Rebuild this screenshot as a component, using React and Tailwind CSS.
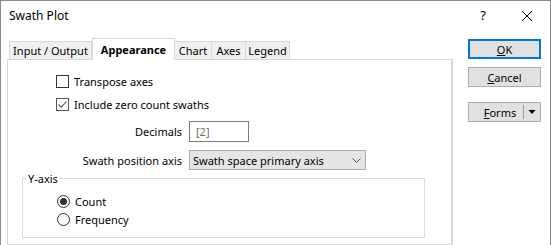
import React from 'react';

const font = { fontFamily: '"Noto Sans", "Open Sans", sans-serif' };

const tabs = [
  { label: 'Input / Output', w: 'w-[83px]' },
  { label: 'Appearance', w: 'w-[83px]', active: true },
  { label: 'Chart', w: 'w-[38px]' },
  { label: 'Axes', w: 'w-[35px]' },
  { label: 'Legend', w: 'w-[45px]' },
];

const Checkbox = ({ checked, label }) => (
  <div className="flex items-center h-[13px]">
    <div className={`w-[13px] h-[13px] border bg-white flex items-center justify-center ${checked ? 'border-[#555]' : 'border-[#333]'}`}>
      {checked && (
        <svg width="11" height="11" viewBox="0 0 11 11">
          <path d="M1.5 5.5 L4.2 8.2 L9.5 2.5" fill="none" stroke="#555" strokeWidth="1.1" />
        </svg>
      )}
    </div>
    <span className="ml-[5px]">{label}</span>
  </div>
);

const Radio = ({ checked, label }) => (
  <div className="flex items-center h-[13px]">
    <div className="w-[13px] h-[13px] rounded-full border border-[#333] bg-white flex items-center justify-center">
      {checked && <div className="w-[7px] h-[7px] rounded-full bg-[#333]" />}
    </div>
    <span className="ml-[5px]">{label}</span>
  </div>
);

const Btn = ({ children, primary, className = '' }) => (
  <div className={`h-[20px] w-[73px] bg-[#e1e1e1] flex items-center justify-center ${primary ? 'border-2 border-[#0078d7]' : 'border border-[#adadad]'} ${className}`}>
    {children}
  </div>
);

export default function App() {
  return (
    <div className="w-[551px] h-[245px] bg-white border-t border-l border-r border-[#8a8a8a] text-[11px] leading-[15px] text-black overflow-hidden flex flex-col whitespace-nowrap" style={font}>
      {/* title bar */}
      <div className="h-[29px] flex items-center shrink-0 text-[12px]">
        <span className="ml-[8px] flex-1">Swath Plot</span>
        <span className="w-[12px] text-center mr-[32px] text-[13px]">?</span>
        <svg width="12" height="12" viewBox="0 0 12 12" className="mr-[17px]">
          <path d="M1 1 L11 11 M11 1 L1 11" stroke="#000" strokeWidth="1" />
        </svg>
      </div>

      <div className="flex flex-1">
        {/* tab control */}
        <div className="ml-[6px] w-[446px] flex flex-col pt-[8px]">
          <div className="flex items-end h-[21px] pl-[2px]">
            {tabs.map((t) =>
              t.active ? (
                <div key={t.label} className={`${t.w} h-[22px] -mb-[1px] bg-white border border-b-0 border-[#d9d9d9] font-bold flex items-center justify-center relative z-10`}>
                  {t.label}
                </div>
              ) : (
                <div key={t.label} className={`${t.w} h-[18px] bg-[#f0f0f0] border border-b-0 border-[#d9d9d9] -ml-px first:ml-0 flex items-center justify-center`}>
                  {t.label}
                </div>
              )
            )}
          </div>
          <div className="flex-1 border border-[#d9d9d9] border-r-2 bg-white pt-[15px] pl-[48px]">
            <div className="flex flex-col gap-[10px]">
              <Checkbox label="Transpose axes" />
              <Checkbox checked label="Include zero count swaths" />
            </div>
            <div className="flex items-center mt-[10px] -ml-[48px]">
              <span className="w-[181px] text-right pr-[7px]">Decimals</span>
              <div className="w-[60px] h-[21px] border border-[#7a7a7a] bg-white flex items-center pl-[6px] text-[#6d6d6d]">[2]</div>
            </div>
            <div className="flex items-center mt-[8px] -ml-[48px]">
              <span className="w-[181px] text-right pr-[7px]">Swath position axis</span>
              <div className="w-[177px] h-[20px] border border-[#adadad] bg-[#e5e5e5] flex items-center pl-[3px] pr-[4px]">
                <span className="flex-1">Swath space primary axis</span>
                <svg width="9" height="5" viewBox="0 0 9 5">
                  <path d="M0.5 0.5 L4.5 4.5 L8.5 0.5" fill="none" stroke="#555" strokeWidth="1" />
                </svg>
              </div>
            </div>
            <div className="relative mt-[8px] -ml-[34px] w-[403px] h-[60px] border border-[#dcdcdc] pt-[16px] pl-[34px] flex flex-col gap-[5px]">
              <span className="absolute -top-[8px] left-[3px] bg-white px-[2px] leading-[15px]">Y-axis</span>
              <Radio checked label="Count" />
              <Radio label="Frequency" />
            </div>
          </div>
        </div>

        {/* buttons */}
        <div className="ml-[15px] pt-[9px] flex flex-col">
          <Btn primary><span><span className="underline">O</span>K</span></Btn>
          <Btn className="mt-[8px]"><span><span className="underline">C</span>ancel</span></Btn>
          <div className="mt-[15px] h-[20px] w-[73px] bg-[#e1e1e1] border border-[#adadad] flex items-center">
            <span className="flex-1 text-center pl-[8px]"><span className="underline">F</span>orms</span>
            <div className="w-px h-[14px] bg-[#9a9a9a]" />
            <svg width="16" height="8" viewBox="0 0 16 8">
              <path d="M4.5 2 L11.5 2 L8 6 Z" fill="#000" />
            </svg>
          </div>
        </div>
      </div>
    </div>
  );
}
